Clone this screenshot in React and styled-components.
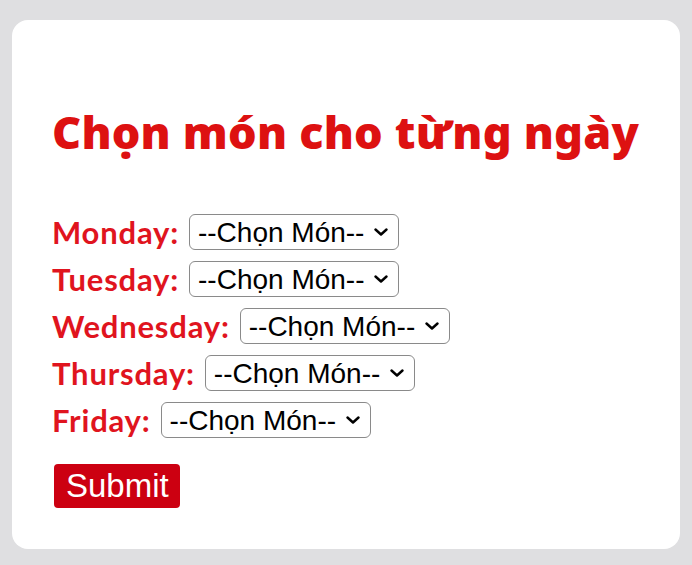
import styled, { createGlobalStyle } from 'styled-components';

const GlobalStyle = createGlobalStyle`
  html, body {
    margin: 0;
    padding: 0;
    background: #dfdfe1;
  }
`;

const Page = styled.div`
  padding: 20px 12px 16px;
`;

const Card = styled.form`
  background: #fff;
  border-radius: 16px;
  height: 529px;
  box-sizing: border-box;
  padding: 89px 40px 0;
`;

const Title = styled.h1`
  margin: 0 0 60px;
  font-family: 'Noto Sans', sans-serif;
  font-weight: 900;
  font-size: 45px;
  line-height: 45px;
  letter-spacing: 0.2px;
  color: #dd1111;
`;

const DayList = styled.div`
  display: flex;
  flex-direction: column;
  gap: 11px;
`;

const Row = styled.div`
  display: flex;
  align-items: center;
  gap: 10px;
  height: 36px;
`;

const Label = styled.label`
  font-family: Lato, sans-serif;
  font-weight: 700;
  font-size: 31px;
  line-height: 36px;
  letter-spacing: 0.8px;
  color: #e0141e;
`;

const SelectWrap = styled.div`
  position: relative;
  display: inline-flex;
`;

const Select = styled.select`
  appearance: none;
  font-family: 'Liberation Sans', Arial, sans-serif;
  font-size: 28px;
  color: #000;
  height: 36px;
  padding: 0 33px 0 8px;
  border: 1px solid #8a8a8a;
  border-radius: 6px;
  background: #fff;
`;

const Chevron = styled.svg`
  position: absolute;
  right: 11px;
  top: 14px;
  width: 14px;
  height: 8px;
  pointer-events: none;
`;

const SubmitButton = styled.button`
  margin-top: 15px;
  margin-left: 2px;
  align-self: flex-start;
  background: #cc0011;
  color: #fff;
  border: none;
  border-radius: 4px;
  font-family: 'Liberation Sans', Arial, sans-serif;
  font-size: 33px;
  height: 44px;
  padding: 0 11px 0 12px;
`;

const days = ['Monday', 'Tuesday', 'Wednesday', 'Thursday', 'Friday'];

const DishSelect = () => (
  <SelectWrap>
    <Select defaultValue="">
      <option value="">--Chọn Món--</option>
      <option value="pho">Phở</option>
      <option value="bun">Bún chả</option>
      <option value="com">Cơm tấm</option>
    </Select>
    <Chevron viewBox="0 0 14 8">
      <path d="M1.5 1.5 L7 6.5 L12.5 1.5" fill="none" stroke="#000" strokeWidth="2.4" strokeLinecap="round" strokeLinejoin="round" />
    </Chevron>
  </SelectWrap>
);

export default function App() {
  return (
    <>
      <GlobalStyle />
      <Page>
        <Card onSubmit={(e) => e.preventDefault()}>
          <Title>Chọn món cho từng ngày</Title>
          <DayList>
            {days.map((day) => (
              <Row key={day}>
                <Label>{day}:</Label>
                <DishSelect />
              </Row>
            ))}
            <SubmitButton type="submit">Submit</SubmitButton>
          </DayList>
        </Card>
      </Page>
    </>
  );
}
